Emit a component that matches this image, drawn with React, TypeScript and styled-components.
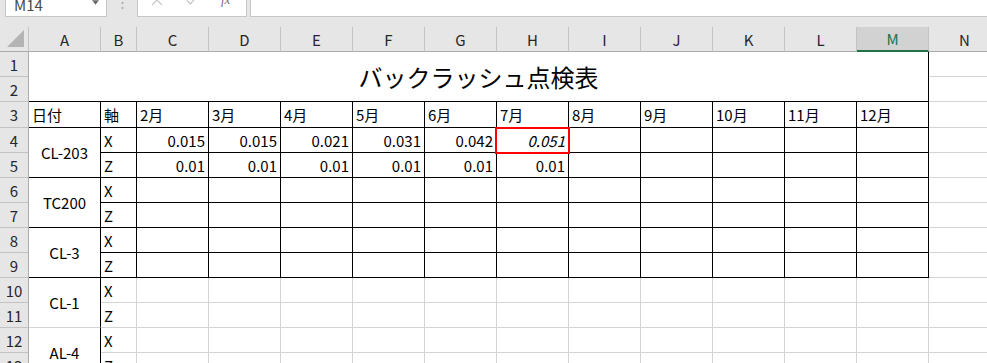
import styled, { createGlobalStyle } from 'styled-components'

const FONT = '"Noto Sans CJK JP", "Noto Sans", sans-serif'
const GRID = '#d4d4d4'
const HEAD_BG = '#e6e6e6'
const HEAD_LINE = '#ababab'
const HEAD_SEP = '#c3c3c3'

const COLUMNS = ['A', 'B', 'C', 'D', 'E', 'F', 'G', 'H', 'I', 'J', 'K', 'L', 'M', 'N']
const MONTHS = [2, 3, 4, 5, 6, 7, 8, 9, 10, 11, 12]

type Machine = {
  name: string
  inTable: boolean
  x: string[]
  z: string[]
}

const MACHINES: Machine[] = [
  {
    name: 'CL-203',
    inTable: true,
    x: ['0.015', '0.015', '0.021', '0.031', '0.042', '0.051'],
    z: ['0.01', '0.01', '0.01', '0.01', '0.01', '0.01'],
  },
  { name: 'TC200', inTable: true, x: [], z: [] },
  { name: 'CL-3', inTable: true, x: [], z: [] },
  { name: 'CL-1', inTable: false, x: [], z: [] },
  { name: 'AL-4', inTable: false, x: [], z: [] },
]

const GlobalStyle = createGlobalStyle`
  html, body {
    margin: 0;
    padding: 0;
    overflow: hidden;
    background: #ffffff;
  }
  * {
    box-sizing: border-box;
  }
`

export default function App() {
  let rowNo = 3

  return (
    <>
      <GlobalStyle />
      <Frame>
        <FormulaBar>
          <NameBox>
            M14
            <DropArrow viewBox="0 0 8 5">
              <polygon points="0,0 8,0 4,5" fill="#6b6b6b" />
            </DropArrow>
          </NameBox>
          <Separator>
            <svg width="3" height="14" viewBox="0 0 3 14">
              <circle cx="1.5" cy="2" r="1" fill="#a6a6a6" />
              <circle cx="1.5" cy="7" r="1" fill="#a6a6a6" />
              <circle cx="1.5" cy="12" r="1" fill="#a6a6a6" />
            </svg>
          </Separator>
          <FxBox>
            <ToolIcon viewBox="0 0 12 12">
              <path d="M1 1 L11 11 M11 1 L1 11" stroke="#c8c8c8" strokeWidth="1.3" fill="none" />
            </ToolIcon>
            <ToolIcon viewBox="0 0 12 12">
              <path d="M1 6.5 L4.5 10 L11 2" stroke="#c8c8c8" strokeWidth="1.3" fill="none" />
            </ToolIcon>
            <FxLabel>fx</FxLabel>
          </FxBox>
          <FormulaInput />
        </FormulaBar>

        <Sheet>
          <Corner>
            <svg width="17" height="17" viewBox="0 0 17 17">
              <polygon points="17,0 17,17 0,17" fill="#b4b4b4" />
            </svg>
          </Corner>
          {COLUMNS.map((c) => (
            <ColHead key={c} $active={c === 'M'}>
              {c}
            </ColHead>
          ))}

          {/* rows 1-2: merged title */}
          <RowHead>1</RowHead>
          <TitleCell>バックラッシュ点検表</TitleCell>
          <Cell />
          <RowHead>2</RowHead>
          <Cell />

          {/* row 3: header labels */}
          <RowHead>3</RowHead>
          <Cell $right $bottom>日付</Cell>
          <Cell $right $bottom>軸</Cell>
          {MONTHS.map((m) => (
            <Cell key={m} $right $bottom>
              {m}月
            </Cell>
          ))}
          <Cell />

          {MACHINES.flatMap((mc) =>
            (['X', 'Z'] as const).map((axis, i) => {
              const values = axis === 'X' ? mc.x : mc.z
              const n = ++rowNo
              const black = mc.inTable
              return [
                <RowHead key={`h${n}`}>{n}</RowHead>,
                i === 0 ? (
                  <Cell key={`a${n}`} $rows={2} $align="center" $right $bottom={black}>
                    {mc.name}
                  </Cell>
                ) : null,
                <Cell key={`b${n}`} $right={black} $bottom={black}>
                  {axis}
                </Cell>,
                ...MONTHS.map((m, k) => {
                  const marked = mc.name === 'CL-203' && axis === 'X' && m === 7
                  return (
                    <Cell
                      key={`${n}-${m}`}
                      $align="right"
                      $right={black}
                      $bottom={black}
                      $italic={marked}
                      $marked={marked}
                    >
                      {values[k] ?? ''}
                    </Cell>
                  )
                }),
                <Cell key={`n${n}`} />,
              ]
            })
          )}
        </Sheet>
      </Frame>
    </>
  )
}

const Frame = styled.div`
  width: 987px;
  height: 363px;
  overflow: hidden;
  background: ${HEAD_BG};
  font-family: ${FONT};
  color: #000000;
`

const FormulaBar = styled.div`
  display: flex;
  align-items: stretch;
  height: 30px;
  margin-top: -13px;
  margin-bottom: 10px;
`

const NameBox = styled.div`
  position: relative;
  display: flex;
  align-items: center;
  width: 102px;
  margin-left: 5px;
  padding: 4px 0 0 8px;
  background: #ffffff;
  border: 1px solid #c6c6c6;
  font-size: 15px;
  color: #4a4a4a;
`

const DropArrow = styled.svg`
  position: absolute;
  right: 7px;
  top: 12px;
  width: 7px;
  height: 5px;
`

const Separator = styled.div`
  display: flex;
  align-items: center;
  justify-content: center;
  width: 30px;
  padding-top: 1px;
`

const FxBox = styled.div`
  display: flex;
  align-items: center;
  gap: 23px;
  width: 110px;
  padding: 0 0 4px 13px;
  background: #ffffff;
  border: 1px solid #c6c6c6;
`

const ToolIcon = styled.svg`
  width: 12px;
  height: 12px;
  flex: none;
`

const FxLabel = styled.span`
  font-family: "Liberation Serif", serif;
  font-style: italic;
  font-size: 13px;
  color: #6f6f6f;
`

const FormulaInput = styled.div`
  flex: 1;
  margin-left: 3px;
  background: #ffffff;
  border: 1px solid #c6c6c6;
  border-right: none;
`

const Sheet = styled.div`
  display: grid;
  grid-template-columns: 29px 72px 36px repeat(11, 72px) 72px;
  grid-template-rows: 25px 25px 25px 26px repeat(10, 25px);
  width: 1001px;
  background: #ffffff;
`

const Corner = styled.div`
  display: flex;
  align-items: flex-end;
  justify-content: flex-end;
  padding: 0 4px 4px 0;
  background: ${HEAD_BG};
  border-right: 1px solid ${HEAD_SEP};
  border-bottom: 1px solid ${HEAD_LINE};
`

const ColHead = styled.div<{ $active?: boolean }>`
  display: flex;
  align-items: center;
  justify-content: center;
  background: ${(p) => (p.$active ? '#d2d2d2' : HEAD_BG)};
  border-right: 1px solid ${HEAD_SEP};
  border-bottom: ${(p) => (p.$active ? '2px solid #217346' : `1px solid ${HEAD_LINE}`)};
  font-size: 15px;
  color: ${(p) => (p.$active ? '#217346' : '#262626')};
`

const RowHead = styled.div`
  display: flex;
  align-items: center;
  justify-content: center;
  background: ${HEAD_BG};
  border-right: 1px solid ${HEAD_LINE};
  border-bottom: 1px solid ${HEAD_SEP};
  font-size: 15px;
  color: #262626;
`

const Cell = styled.div<{
  $align?: 'left' | 'right' | 'center'
  $right?: boolean
  $bottom?: boolean
  $rows?: number
  $italic?: boolean
  $marked?: boolean
}>`
  position: relative;
  display: flex;
  align-items: center;
  justify-content: ${(p) =>
    p.$align === 'right' ? 'flex-end' : p.$align === 'center' ? 'center' : 'flex-start'};
  grid-row: span ${(p) => p.$rows ?? 1};
  min-width: 0;
  padding: 0 3px;
  border-right: 1px solid ${(p) => (p.$right ? '#000000' : GRID)};
  border-bottom: 1px solid ${(p) => (p.$bottom ? '#000000' : GRID)};
  font-size: 15px;
  font-style: ${(p) => (p.$italic ? 'italic' : 'normal')};
  white-space: nowrap;

  ${(p) =>
    p.$marked &&
    `
    &::after {
      content: '';
      position: absolute;
      top: -1px;
      left: -2px;
      right: -2px;
      bottom: -2px;
      border: 2px solid #ff0000;
      z-index: 1;
    }
  `}
`

const TitleCell = styled(Cell)`
  grid-column: span 13;
  grid-row: span 2;
  justify-content: center;
  border-right: 1px solid #000000;
  border-bottom: 1px solid #000000;
  font-size: 24px;
`
